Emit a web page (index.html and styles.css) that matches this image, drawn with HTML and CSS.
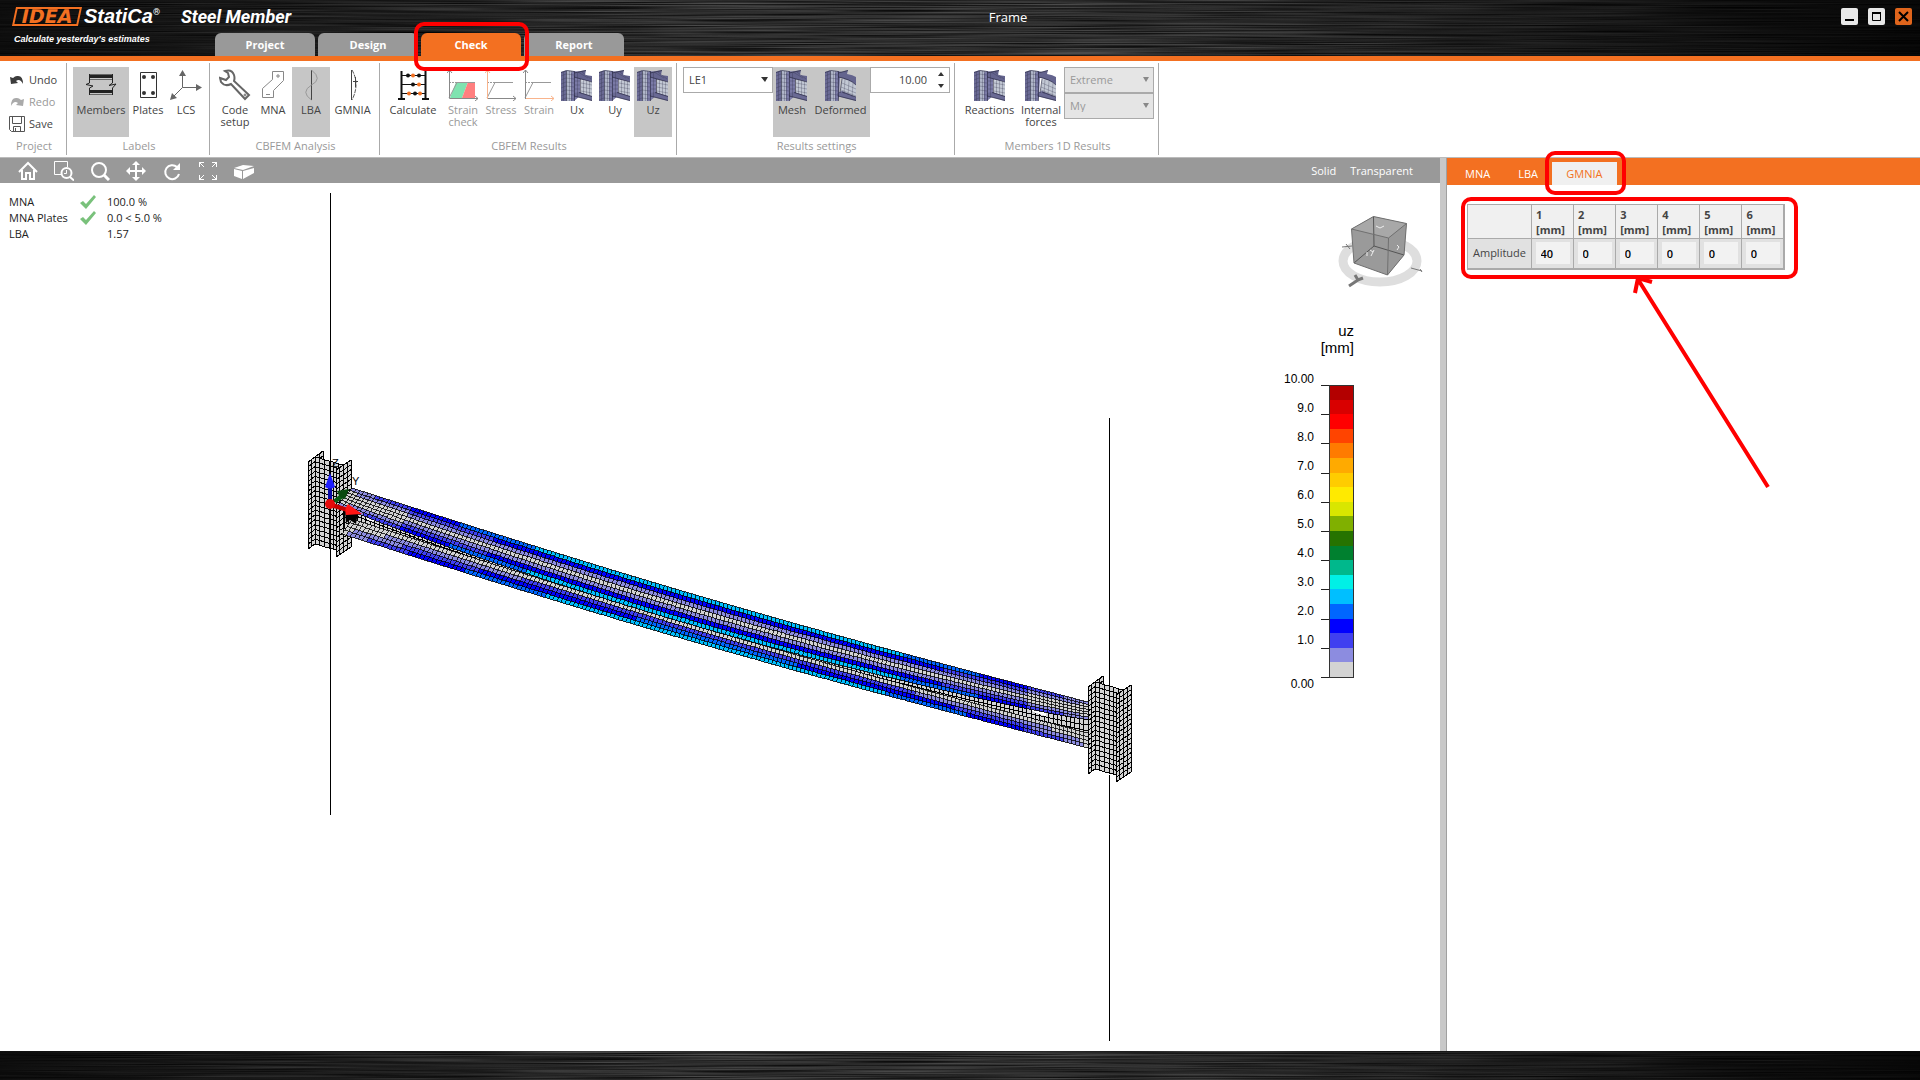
FILE: index.html
```html
<!DOCTYPE html>
<html lang="en">
<head>
<meta charset="utf-8">
<title>IDEA StatiCa Steel Member - Frame</title>
<link rel="stylesheet" href="styles.css">
</head>
<body>
<svg class="defs" aria-hidden="true">
  <defs>
    <filter id="brush" x="0" y="0" width="100%" height="100%" color-interpolation-filters="sRGB">
      <feTurbulence type="fractalNoise" baseFrequency="0.006 0.9" numOctaves="2" seed="4"/>
      <feColorMatrix values="0.4 0 0 0 -0.03  0.4 0 0 0 -0.03  0.4 0 0 0 -0.03  0 0 0 0 1"/>
    </filter>
    <symbol id="fem" viewBox="0 0 32 32">
      <path fill="#6a6a94" d="M0 3 6 1V32H0z"/>
      <path fill="#b0b6c9" d="M5 1 13 2V32H5z"/>
      <path fill="#7a7aa6" d="M10 4 13 2 24 4 19 9V27L13 32H10z"/>
      <path fill="#64648e" d="M14 3 25 1 24 6 31 7V13L18 10 13 8z"/>
      <path fill="#c2c8d4" d="M20 11 31 13V27L20 24z"/>
      <path fill="#6a6a94" d="M13 24 18 23 31 27V32L13 27z"/>
      <path fill="none" stroke="#23233c" stroke-opacity=".6" d="M0 3.500 6 1.500 13 2.500M13.500 2V32M5.500 2V32M13 4 25 1.500M13 8 31 13M19.500 10V24M13 27 31 31.500M18 23.500 31 27.500"/>
      <path fill="none" stroke="#2d2d48" stroke-opacity=".28" d="M2.500 3V32M8.500 2V32M10.500 2V32M16.500 4V28M0 7 5 5 13 6M0 11 5 9 13 10M0 15 5 13 13 14M0 19 5 17 13 18M0 23 5 21 13 22M0 27 5 25 13 26M0 31 5 29 13 30M22.500 11V25M25.500 12V26M28.500 12V27M20 14 31 16M20 18 31 20M20 22 31 24M14 12H19M14 16H19M14 20H19M17 3 27 9M21 3 30 10"/>
    </symbol>
    <symbol id="femdef" viewBox="0 0 32 32">
      <path fill="#6a6a94" d="M0 3 6 1V32H0z"/>
      <path fill="#b0b6c9" d="M5 1 13 2V32H5z"/>
      <path fill="#7a7aa6" d="M10 4 13 2 22 4 15 9 14 27 13 32H10z"/>
      <path fill="#64648e" d="M13 4 23 1 22 5Q28 6 31 8V17Q25 11 13 8z"/>
      <path fill="#c2c8d4" d="M17 10Q26 11 31 16V29L15 24z"/>
      <path fill="#6a6a94" d="M12 24 17 22 31 28V32L12 27z"/>
      <path fill="none" stroke="#23233c" stroke-opacity=".6" d="M0 3.500 6 1.500 13 2.500M13.500 2V32M5.500 2V32M13 4 23 1.500M13 8Q25 10 31 16M17 10 15 24M13 27 31 31.500M17 23 31 28"/>
      <path fill="none" stroke="#2d2d48" stroke-opacity=".28" d="M2.500 3V32M8.500 2V32M10.500 2V32M0 7 5 5 13 6M0 11 5 9 13 10M0 15 5 13 13 14M0 19 5 17 13 18M0 23 5 21 13 22M0 27 5 25 13 26M0 31 5 29 13 30M20 10 19 25M24 12 23 26M28 14 27 28M17 14 31 20M16 18 31 24M16 21 31 27"/>
    </symbol>
    <symbol id="curve" viewBox="0 0 32 32">
      <path fill="none" stroke="#999" stroke-dasharray="2 1" d="M2 13.500H12"/>
      <path fill="none" stroke="#999" d="M2 29 10 13.500H28"/>
    </symbol>
  </defs>
</svg>

<header class="app-header">
  <div class="metal"><svg class="brushed" aria-hidden="true"><rect width="100%" height="100%" filter="url(#brush)"/></svg></div>
  <div class="brand">
    <div class="logo">
      <span class="logo-idea">IDEA</span><span class="logo-name">StatiCa<sup>®</sup></span>
    </div>
    <div class="tagline">Calculate yesterday's estimates</div>
  </div>
  <div class="header-main">
    <div class="title-row">
      <span class="product">Steel Member</span>
      <span class="doc-title">Frame</span>
      <div class="window-buttons">
        <button type="button" aria-label="Minimize"><svg width="17" height="17"><path d="M4 12H13" stroke="#000" stroke-width="2"/></svg></button>
        <button type="button" aria-label="Maximize"><svg width="17" height="17"><path d="M4.500 4.500H12.500V12.500H4.500z" fill="none" stroke="#000"/><path d="M4 5H13" stroke="#000" stroke-width="2"/></svg></button>
        <button type="button" class="close" aria-label="Close"><svg width="17" height="17"><path d="M4 4 13 13M13 4 4 13" stroke="#000" stroke-width="2"/></svg></button>
      </div>
    </div>
    <nav class="main-tabs">
      <button type="button">Project</button>
      <button type="button">Design</button>
      <button type="button" class="active">Check<span class="ring ring-check"></span></button>
      <button type="button">Report</button>
    </nav>
  </div>
</header>

<section class="ribbon">
  <div class="group group-project">
    <div class="stack">
      <button type="button"><svg width="16" height="16"><path d="M1 5 2 12 9 11 7 9Q11 6 14 12 14 3 8 4 6 4 4 6z" fill="#3c3c3c"/></svg>Undo</button>
      <button type="button" disabled><svg width="16" height="16"><path d="M15 5 14 12 7 11 9 9Q5 6 2 12 2 3 8 4 10 4 12 6z" fill="#aaa"/></svg>Redo</button>
      <button type="button"><svg width="16" height="16" fill="none" stroke="#555"><path d="M.5.500H15.500V15.500H2.500L.5 13.500zM3.500 1V7.500H12.500V1M4.500 15V10.500H11.500V15M6.500 12V15"/></svg>Save</button>
    </div>
    <div class="caption">Project</div>
  </div>

  <div class="group">
    <div class="tools">
      <button type="button" class="on w-members"><svg width="32" height="32" fill="none"><path d="M4 7.500H27M4 22.500H27" stroke="#222" stroke-width="3"/><path d="M4 10.500H27M4 25.500H27M4 5.500H27" stroke="#666"/><path d="M4.500 5V14L1 15.500 8 17 4.500 19V26M27.500 5V14L24 16.500 31 15 27.500 19V26" stroke="#222"/></svg>Members</button>
      <button type="button"><svg width="32" height="32" fill="none" stroke="#333"><path d="M8.500 3.500H24.500V28.500H8.500z"/><g stroke-width="2"><circle cx="12" cy="8" r="1"/><circle cx="21" cy="8" r="1"/><circle cx="12" cy="24" r="1"/><circle cx="21" cy="24" r="1"/></g></svg>Plates</button>
      <button type="button"><svg width="32" height="32" fill="#666" stroke="#666"><path d="M12.500 5V18.500H27M12.500 18.500 4 27" fill="none" stroke-width="1"/><path stroke="none" d="M12.500 1 16 7H9zM32 18.500 26 22V15zM0 31 2 24 7 29z"/></svg>LCS</button>
    </div>
    <div class="caption">Labels</div>
  </div>

  <div class="group">
    <div class="tools">
      <button type="button"><svg width="32" height="32" fill="none" stroke="#666" stroke-width="2"><path d="M6 2Q13 0 15 6 16 9 15 12L30 26 26 30 12 15Q6 18 2 13L1 9 7 11 10 8 9 4z"/><circle cx="26" cy="26" r="1" stroke-width="1"/></svg>Code setup</button>
      <button type="button"><svg width="32" height="32" fill="none" stroke="#888"><path d="M15.500 2.500H26.500V11.500L16.500 21.500V28.500H5.500V19.500L15.500 10.500zM21 5V9M19 7H23M9 25.500H13"/></svg>MNA</button>
      <button type="button" class="on"><svg width="32" height="32" fill="none"><path d="M16.500 1V31" stroke="#444"/><path d="M16.500 1Q28 10 16.500 16 5 23 16.500 31" stroke="#999"/></svg>LBA</button>
      <button type="button" class="w-gmnia"><svg width="32" height="32" fill="none"><path d="M14.500 1V31" stroke="#444"/><path d="M15 1Q23 15 15 31" stroke="#555" stroke-dasharray="4 1"/><path d="M18.500 8V18M16 12.500H21" stroke="#444"/></svg>GMNIA</button>
    </div>
    <div class="caption">CBFEM Analysis</div>
  </div>

  <div class="group">
    <div class="tools">
      <button type="button" class="w-calc"><svg width="32" height="32"><path d="M4.500 2V30M28.500 2V30M1 30H8M25 30H32" stroke="#111" stroke-width="2" fill="none"/><path d="M4 6.500H28M4 15.500H28M4 24.500H28" stroke="#111"/><g fill="#111"><circle cx="11" cy="6.500" r="2"/><circle cx="22" cy="6.500" r="2"/><circle cx="16" cy="15.500" r="2"/><circle cx="18" cy="24.500" r="2"/></g><g fill="#f37021"><circle cx="16" cy="6.500" r="2"/><circle cx="22" cy="15.500" r="2"/><circle cx="12" cy="24.500" r="2"/><circle cx="23" cy="24.500" r="2"/></g></svg>Calculate</button>
      <button type="button" disabled><svg width="32" height="32"><path d="M3 29 9 13H21L15 29z" fill="#7fe3b0"/><path d="M15 29 21 13H28V29z" fill="#ff7f7f"/><use href="#curve"/><path d="M2.500 1V29.500H31M0 4 2.500 1 5 4M28 27 31 29.500 28 32" stroke="#888" fill="none"/></svg>Strain check</button>
      <button type="button" disabled><svg width="32" height="32"><use href="#curve"/><path d="M2.500 29.500H31M28 27 31 29.500 28 32" stroke="#888" fill="none"/><path d="M2.500 30V1M0 4 2.500 1 5 4" stroke="#f9b48c" fill="none"/></svg>Stress</button>
      <button type="button" disabled><svg width="32" height="32"><use href="#curve"/><path d="M2.500 29.500H31M28 27 31 29.500 28 32" stroke="#f9b48c" fill="none"/><path d="M2.500 30V1M0 4 2.500 1 5 4" stroke="#888" fill="none"/></svg>Strain</button>
      <button type="button"><svg width="32" height="32"><use href="#fem"/></svg>Ux</button>
      <button type="button"><svg width="32" height="32"><use href="#fem"/></svg>Uy</button>
      <button type="button" class="on"><svg width="32" height="32"><use href="#fem"/></svg>Uz</button>
    </div>
    <div class="caption">CBFEM Results</div>
  </div>

  <div class="group">
    <div class="tools">
      <div class="pick"><select aria-label="Load case"><option>LE1</option></select><svg width="7" height="5"><path d="M0 0H7L4 5z" fill="#333"/></svg></div>
      <button type="button" class="on"><svg width="32" height="32"><use href="#fem"/></svg>Mesh</button>
      <button type="button" class="on w-deformed"><svg width="32" height="32"><use href="#femdef"/></svg>Deformed</button>
      <div class="spin">
        <input type="text" value="10.00" aria-label="Deformation scale">
        <div class="spin-buttons">
          <button type="button" aria-label="Increase"><svg width="6" height="4"><path d="M3 0 6 4H0z" fill="#333"/></svg></button>
          <button type="button" aria-label="Decrease"><svg width="6" height="4"><path d="M0 0H6L3 4z" fill="#333"/></svg></button>
        </div>
      </div>
    </div>
    <div class="caption">Results settings</div>
  </div>

  <div class="group">
    <div class="tools">
      <button type="button" class="w-reactions"><svg width="32" height="32"><use href="#fem"/></svg>Reactions</button>
      <button type="button" class="w-internal"><svg width="32" height="32"><use href="#femdef"/></svg>Internal forces</button>
      <div class="picks">
        <div class="pick"><select aria-label="Extreme" disabled><option>Extreme</option></select><svg width="6" height="5"><path d="M0 0H6L3 5z" fill="#888"/></svg></div>
        <div class="pick"><select aria-label="Component" disabled><option>My</option></select><svg width="6" height="5"><path d="M0 0H6L3 5z" fill="#888"/></svg></div>
      </div>
    </div>
    <div class="caption">Members 1D Results</div>
  </div>
</section>

<main class="workspace">
  <section class="viewer">
    <div class="viewer-bar">
      <div class="view-tools">
        <button type="button" aria-label="Home"><svg width="20" height="20"><path d="M1 11 10 2 19 11M4 9V18H8V12H12V18H16V9" fill="none" stroke="#fff" stroke-width="2"/></svg></button>
        <button type="button" aria-label="Zoom window"><svg width="20" height="20" fill="none" stroke="#fff"><path d="M8 13.500H.5V.500H13.500V6"/><circle cx="12.500" cy="12" r="5" stroke-width="2"/><path d="M16 16 20 19.500" stroke-width="2"/><path d="M12.500 9V12.500H10"/></svg></button>
        <button type="button" aria-label="Zoom"><svg width="20" height="20" fill="none" stroke="#fff"><circle cx="9" cy="9" r="7" stroke-width="2"/><path d="M14 14 19 19" stroke-width="3"/></svg></button>
        <button type="button" aria-label="Pan"><svg width="20" height="20"><path d="M10 3V17M3 10H17" stroke="#fff" stroke-width="2"/><path fill="#fff" d="M10 0 14 4H6zM10 20 6 16H14zM0 10 4 6V14zM20 10 16 14V6z"/></svg></button>
        <button type="button" aria-label="Rotate"><svg width="20" height="20"><path d="M15 6A7 7 0 1 0 17 13" fill="none" stroke="#fff" stroke-width="2"/><path fill="#fff" d="M18 2V9H11z"/></svg></button>
        <button type="button" aria-label="Fit"><svg width="20" height="20" fill="none" stroke="#fff"><path d="M1.500 6V1.500H6M1 1 6 6M14 1.500H18.500V6M19 1 14 6M1.500 14V18.500H6M1 19 6 14M14 18.500H18.500V14M19 19 14 14"/></svg></button>
        <button type="button" aria-label="Solid view"><svg width="20" height="20"><path fill="#fff" d="M0 8 8 10V18L0 15zM9 10 20 7V12L9 18zM0 7 9 4 20 5 9 9z"/></svg></button>
      </div>
      <div class="view-modes"><button type="button">Solid</button><button type="button">Transparent</button></div>
    </div>
    <div class="canvas">
      <svg id="scene" class="scene" viewBox="0 183 1440 867" preserveAspectRatio="xMinYMin meet" role="img" aria-label="Deformed frame member">
        <g id="mesh" shape-rendering="crispEdges"></g>
        <g shape-rendering="crispEdges" stroke="#000"><path d="M330.500 193V815M1109.500 418V687"/><path d="M1109.500 775V1041"/></g>
        <g>
          <path d="M345 512H358L356 524 350 520 346 523z"/>
          <path d="M328 504V486H332V504z" fill="#0a0aa8"/><path d="M325 487Q330 490 335 487L330 473z" fill="#1e1eff"/>
          <path d="M333 500 342 493 345 497 336 503z" fill="#0a5a14"/><path d="M337 491 349 489 345 499Q339 498 337 491z" fill="#0a4a10"/>
          <path d="M330 502 348 508 347 512 330 507z" fill="#c80000"/><path d="M348 504Q344 509 346 515L362 514z" fill="#ff1414"/>
          <circle cx="330" cy="504" r="5" fill="#e60a0a"/>
          <text x="332" y="467" class="axis">Z</text><text x="352" y="485" class="axis">Y</text>
        </g>
        <g class="nav-cube">
          <ellipse cx="1380" cy="261" rx="37" ry="21" fill="none" stroke="#dedede" stroke-width="9"/>
          <path d="M1351.500 229 1373.500 216.500 1406.500 223.500 1404 255 1387.500 275 1354 263z" fill="#9a9a9a"/>
          <path d="M1351.500 229 1373.500 216.500 1406.500 223.500 1388.500 238z" fill="#a8a8a8"/>
          <path d="M1388.500 238 1406.500 223.500 1404 255 1387.500 275z" fill="#999"/>
          <path d="M1354 263 1374 246 1404 255M1374 246 1373.500 216.500" fill="none" stroke="#555"/>
          <path d="M1351.500 229 1373.500 216.500 1406.500 223.500 1404 255 1387.500 275 1354 263zM1351.500 229 1388.500 238 1406.500 223.500M1388.500 238 1387.500 275" fill="none" stroke="#707070"/>
          <path d="M1376 226 1380 228 1384 226M1367 252V256M1370 250 1373 252 1374 250M1373 252 1371 256M1397 245 1399 247 1397 250" fill="none" stroke="#eee"/>
          <path d="M1355 275 1358 280 1363 278M1358 280 1349 286" fill="none" stroke="#777" stroke-width="3"/>
          <path d="M1342 247 1352 246M1346 244 1350 249M1411 268 1422 271M1420 269 1422 272" fill="none" stroke="#777"/>
        </g>
      </svg>
      <table class="status">
        <tr><th>MNA</th><td><svg width="16" height="14"><path d="M0 8 3 6 6 9 14 0 16 2 6 14z" fill="#79c17b"/></svg></td><td>100.0 %</td></tr>
        <tr><th>MNA Plates</th><td><svg width="16" height="14"><path d="M0 8 3 6 6 9 14 0 16 2 6 14z" fill="#79c17b"/></svg></td><td>0.0 &lt; 5.0 %</td></tr>
        <tr><th>LBA</th><td></td><td>1.57</td></tr>
      </table>
      <div class="legend">
        <div class="legend-title">uz<br>[mm]</div>
        <div class="legend-body">
          <ol class="legend-labels"><li>10.00</li><li>9.0</li><li>8.0</li><li>7.0</li><li>6.0</li><li>5.0</li><li>4.0</li><li>3.0</li><li>2.0</li><li>1.0</li><li class="last">0.00</li></ol>
          <svg class="legend-bar" id="legend-bar" width="33" height="293" shape-rendering="crispEdges"></svg>
        </div>
      </div>
    </div>
  </section>

  <div class="splitter"></div>

  <aside class="panel">
    <nav class="panel-tabs">
      <button type="button">MNA</button><button type="button">LBA</button><button type="button" class="active">GMNIA<span class="ring ring-gmnia"></span></button>
    </nav>
    <div class="panel-body">
      <div class="table-wrap">
        <table class="amplitudes">
          <thead><tr><td></td><th id="m1">1<br>[mm]</th><th id="m2">2<br>[mm]</th><th id="m3">3<br>[mm]</th><th id="m4">4<br>[mm]</th><th id="m5">5<br>[mm]</th><th id="m6">6<br>[mm]</th></tr></thead>
          <tbody><tr><th id="amp">Amplitude</th>
            <td><input type="text" value="40" aria-labelledby="amp m1"></td><td><input type="text" value="0" aria-labelledby="amp m2"></td><td><input type="text" value="0" aria-labelledby="amp m3"></td><td><input type="text" value="0" aria-labelledby="amp m4"></td><td><input type="text" value="0" aria-labelledby="amp m5"></td><td><input type="text" value="0" aria-labelledby="amp m6"></td></tr></tbody>
        </table>
        <span class="ring ring-table"></span>
        <svg class="arrow" width="144" height="218" fill="none" stroke="#f00" stroke-width="4"><path d="M137 212 8 6M4 18 7 3 21 7"/></svg>
      </div>
    </div>
  </aside>
</main>

<footer class="app-footer"><div class="metal"><svg class="brushed" aria-hidden="true"><rect width="100%" height="100%" filter="url(#brush)"/></svg></div></footer>
<script src="scene.js"></script>
</body>
</html>
```

FILE: styles.css
```css
* { box-sizing: border-box; }
body {
  margin: 0;
  min-height: 100vh;
  display: flex;
  flex-direction: column;
  background: #fff;
  color: #444;
  font: 11px/12px "Open Sans", "Noto Sans", sans-serif;
}
button, input, select { font: inherit; color: inherit; margin: 0; padding: 0; border: 0; background: none; border-radius: 0; }
svg { display: block; flex: none; }
.defs { position: absolute; width: 0; height: 0; }
.metal { position: absolute; inset: 0; }
.metal::after { content: ""; position: absolute; inset: 0; background: linear-gradient(90deg, rgba(0,0,0,.7), rgba(0,0,0,0) 35%, rgba(0,0,0,0) 60%, rgba(0,0,0,.85)); }
.brushed { width: 100%; height: 100%; }
.ring { position: absolute; border: 4px solid #f00; border-radius: 10px; pointer-events: none; }

/* header */
.app-header { position: relative; z-index: 2; display: flex; height: 61px; background: #111; border-bottom: 5px solid #f37021; color: #fff; }
.brand { position: relative; width: 174px; padding: 6px 0 0 14px; }
.logo { display: flex; align-items: center; gap: 4px; height: 20px; font: italic bold 20px/20px "Liberation Sans", sans-serif; }
.logo-idea { width: 66px; height: 19px; border: 2px solid #f37021; transform: skewX(-12deg); color: #f37021; font: bold 19px/15px "DejaVu Sans", sans-serif; text-align: center; }
.logo sup { font: 9px/9px Roboto, sans-serif; }
.tagline { margin-top: 7px; font: italic bold 9px/12px "Liberation Sans", sans-serif; white-space: nowrap; }
.header-main { position: relative; flex: 1; display: flex; flex-direction: column; justify-content: space-between; }
.title-row { display: flex; align-items: center; height: 33px; padding: 0 8px 0 7px; }
.product { width: 120px; font: italic bold 18px/20px Roboto, sans-serif; white-space: nowrap; }
.doc-title { flex: 1; padding-right: 126px; text-align: center; font-size: 13px; line-height: 16px; }
.window-buttons { display: flex; gap: 10px; }
.window-buttons button { width: 17px; height: 17px; border-radius: 2px; background: #e8e8e8; }
.window-buttons .close { background: #e0651c; }
.main-tabs { display: flex; gap: 3px; padding-left: 41px; }
.main-tabs button { position: relative; width: 100px; height: 23px; border-radius: 6px 6px 0 0; background: #999; color: #fff; font-weight: bold; }
.main-tabs .active { z-index: 1; background: #f37021; }
.ring-check { inset: -11px -8px -15px -7px; }

/* ribbon */
.ribbon { display: flex; height: 97px; padding: 2px 0; border-bottom: 1px solid #bbb; }
.group { display: flex; flex-direction: column; justify-content: space-between; padding: 4px 4px 2px 6px; border-right: 1px solid #aaa; }
.caption { text-align: center; color: #999; line-height: 14px; }
.tools { display: flex; align-items: flex-start; }
.tools > button { display: flex; flex-direction: column; align-items: center; gap: 3px; width: 38px; height: 70px; padding-top: 2px; text-align: center; }
.ribbon button:disabled { color: #999; }
.tools > .on { background: #c6c6c6; }
.tools > .w-members { width: 56px; }
.tools > .w-gmnia { width: 45px; }
.tools > .w-calc { width: 54px; margin-right: 4px; }
.tools > .w-deformed { width: 59px; }
.tools > .w-reactions { width: 57px; }
.tools > .w-internal { width: 46px; }
.group-project { width: 67px; padding-right: 4px; }
.stack { display: flex; flex-direction: column; gap: 2px; padding: 3px 0 0 3px; }
.stack button { display: flex; align-items: center; gap: 4px; height: 20px; }
.pick { position: relative; width: 90px; height: 26px; }
.pick select { width: 100%; height: 26px; padding-left: 5px; border: 1px solid #aaa; appearance: none; background: #fff; }
.pick select:disabled { background: #e5e5e5; color: #999; opacity: 1; }
.pick svg { position: absolute; right: 5px; top: 10px; pointer-events: none; }
.spin { display: flex; width: 80px; height: 26px; border: 1px solid #aaa; }
.spin input { flex: 1; min-width: 0; text-align: right; }
.spin-buttons { display: flex; flex-direction: column; width: 22px; padding: 0 5px 0 0; }
.spin-buttons button { flex: 1; display: flex; align-items: center; justify-content: flex-end; }

/* workspace */
.workspace { flex: 1; display: flex; }
.viewer { flex: 1; display: flex; flex-direction: column; }
.viewer-bar { display: flex; justify-content: space-between; align-items: center; height: 25px; padding: 0 27px 0 18px; background: #999; color: #fff; }
.view-tools { display: flex; gap: 16px; }
.view-modes { display: flex; gap: 14px; }
.canvas { position: relative; flex: 1; }
.scene { position: absolute; inset: 0; width: 100%; height: 100%; }
.axis { font: 11px "Liberation Sans", sans-serif; }
.status { position: absolute; left: 9px; top: 11px; border-collapse: collapse; color: #222; line-height: 16px; }
.status th { width: 71px; padding: 0; text-align: left; font-weight: normal; }
.status td { padding: 0 11px 0 0; height: 16px; white-space: nowrap; }
.legend { position: absolute; top: 139px; right: 86px; display: flex; flex-direction: column; align-items: flex-end; gap: 9px; color: #000; font-family: "Liberation Sans", sans-serif; }
.legend-title { font-size: 15px; line-height: 17px; text-align: right; }
.legend-body { display: flex; gap: 7px; }
.legend-labels { margin: 0; padding: 0; list-style: none; text-align: right; font-size: 12px; line-height: 29px; }
.legend-labels .last { padding-top: 15px; }
.legend-bar { margin-top: 20px; }
.splitter { width: 7px; background: #c8c8c8; border-right: 1px solid #a0a0a0; }
.panel { width: 473px; }
.panel-tabs { display: flex; align-items: flex-end; height: 27px; padding-left: 4px; background: #f37021; color: #fff; }
.panel-tabs button { position: relative; height: 23px; padding: 0 14px; }
.panel-tabs .active { width: 65px; padding: 0; background: #f0f0f0; color: #f37021; }
.ring-gmnia { inset: -11px -9px -10px -7px; }
.panel-body { padding: 19px 20px; }
.table-wrap { position: relative; width: 318px; }
.ring-table { inset: -7px -13px -9px -6px; }
.arrow { position: absolute; left: 164px; top: 71px; }
.amplitudes { width: 318px; table-layout: fixed; border-collapse: collapse; border: 1px solid #aaa; border-right-width: 2px; border-bottom-width: 2px; }
.amplitudes th, .amplitudes td { height: 30px; padding: 0; border: 1px solid #aaa; background: #e1e1e1; }
.amplitudes thead th, .amplitudes thead td { height: 34px; background: #f0f0f0; line-height: 15px; text-align: left; padding-left: 4px; }
.amplitudes thead td { width: 64px; }
.amplitudes tbody th { font-weight: normal; }
.amplitudes input { display: block; width: 34px; height: 22px; margin: 0 auto; padding-left: 5px; background: #f2f2f2; color: #000; font-weight: 600; }

.app-footer { position: relative; height: 29px; background: #111; }
```

FILE: scene.js
```js
(function () {
  const NS = 'http://www.w3.org/2000/svg';
  // contour colours from 0 to 10 mm, one for each half millimetre
  const scale = ['#d3d3d3', '#8c8ce0', '#4040f0', '#0000ff', '#0066ff', '#00bfff', '#00f0e6', '#00b88c', '#00802f', '#267300',
    '#80b000', '#d9e600', '#ffea00', '#ffcc00', '#ffaa00', '#ff7b00', '#ff4400', '#ff0000', '#d90000', '#b30000'];

  function add(parent, name, attrs) {
    const el = document.createElementNS(NS, name);
    for (const key in attrs) el.setAttribute(key, attrs[key]);
    parent.appendChild(el);
    return el;
  }

  const mesh = document.getElementById('mesh');

  // Draws a patch: pos(u, v) gives a point, value(u, v) the displacement
  function patch(nu, nv, pos, value, weight) {
    const fills = {};
    let grid = '';
    const pt = (i, j) => pos(i / nu, j / nv).map(n => n.toFixed(1)).join(' ');
    for (let i = 0; i < nu; i++) {
      for (let j = 0; j < nv; j++) {
        const c = Math.min(19, Math.floor(value((i + .5) / nu, (j + .5) / nv) * 2));
        fills[c] = (fills[c] || '') + `M${pt(i, j)}L${pt(i + 1, j)}L${pt(i + 1, j + 1)}L${pt(i, j + 1)}z`;
      }
    }
    for (let j = 0; j <= nv; j++) {
      grid += `M${pt(0, j)}`;
      for (let i = 1; i <= nu; i++) grid += `L${pt(i, j)}`;
    }
    for (let i = 0; i <= nu; i++) grid += `M${pt(i, 0)}L${pt(i, nv)}`;
    for (const c in fills) add(mesh, 'path', { d: fills[c], fill: scale[c] });
    add(mesh, 'path', { d: grid, fill: 'none', stroke: '#000', 'stroke-width': weight || 1 });
  }

  const plane = (x0, y0, x1, y1, h) => (u, v) => [x0 + (x1 - x0) * u, y0 + (y1 - y0) * u + h * v];
  const zero = () => 0;
  function column(x, y) {
    patch(4, 18, plane(x, y + 11, x + 15, y, 87), zero);
    patch(6, 18, plane(x + 7, y + 6, x + 35, y + 14, 87), zero);
    patch(4, 18, plane(x + 28, y + 19, x + 43, y + 9, 87), zero);
  }

  const sag = t => 7 * Math.sin(Math.PI * t);
  const upperEdge = t => 488 + 214 * t + sag(t);
  const depth = t => 17 + 12 * Math.pow(Math.sin(Math.PI * t), .6);
  const wave = t => Math.pow(Math.sin(Math.PI * t), .6) * .88 + .12;
  const beamX = t => 352 + 736 * t;

  column(308, 451);
  // web
  patch(170, 4, (u, v) => [beamX(u) - 8 * (1 - u), upperEdge(u) + depth(u) + v * (40 - depth(u))], zero);
  // bottom flange
  patch(184, 4, (u, v) => [beamX(u) - 10 * (1 - u) * v, upperEdge(u) + 31 + 15 * v], (u, v) => 3.3 * v * wave(u), .8);
  // openings between web and flange
  add(mesh, 'path', { d: 'M367 514 385 518V523L367 520zM405 530 416 533 411 534zM1028 707 1046 711V716L1033 712z', fill: '#fff' });
  // top flange
  patch(184, 7, (u, v) => [beamX(u) - 14 * (1 - u) * v, upperEdge(u) + depth(u) * v], (u, v) => 3.5 * Math.abs(v * 2 - 1) * wave(u), .8);
  column(1088, 676);

  const bar = document.getElementById('legend-bar');
  for (let i = 0; i < 20; i++) {
    const y0 = Math.round(i * 14.6), y1 = Math.round((i + 1) * 14.6);
    add(bar, 'rect', { x: 8, y: y0, width: 24, height: y1 - y0, fill: scale[19 - i] });
  }
  add(bar, 'path', { d: 'M8 .5H32.5V292.5H8.5V0', fill: 'none', stroke: '#333' });
  for (let i = 0; i <= 10; i++) add(bar, 'rect', { x: 0, y: Math.round(i * 29.2), width: 8, height: 1, fill: '#222' });
})();
```
